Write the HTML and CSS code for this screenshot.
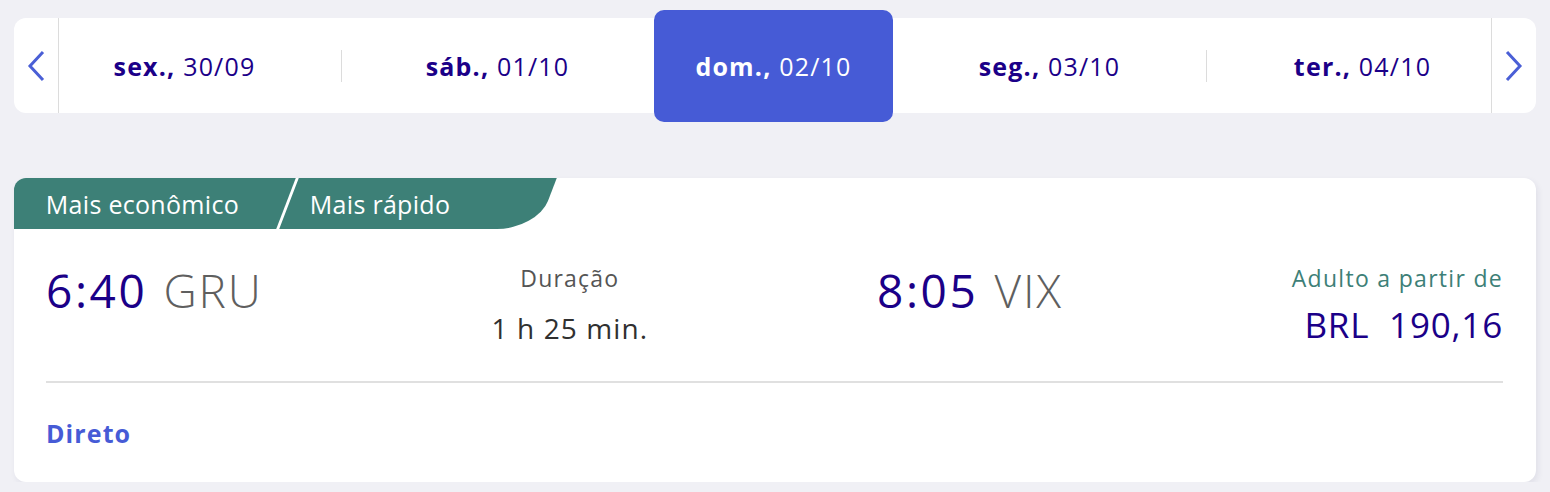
FILE: index.html
```html
<!DOCTYPE html>
<html lang="pt-BR">
<head>
    <meta charset="UTF-8">
    <meta name="viewport" content="width=device-width, initial-scale=1.0">
    <title>Voos GRU - VIX</title>
    <link rel="stylesheet" href="styles.css">
</head>
<body>
    <!-- Carrossel de datas -->
    <div class="date-bar">
        <button class="nav nav-prev" aria-label="Anterior">
            <svg width="18" height="32" viewBox="0 0 18 32"><path d="M16 2 L3 16 L16 30" fill="none" stroke="#4a5fd6" stroke-width="3"/></svg>
        </button>
        <div class="days">
            <div class="day"><b>sex.,</b> 30/09</div>
            <span class="sep"></span>
            <div class="day"><b>sáb.,</b> 01/10</div>
            <span class="sep sep-hidden"></span>
            <div class="day day-active"><b>dom.,</b> 02/10</div>
            <span class="sep sep-hidden"></span>
            <div class="day"><b>seg.,</b> 03/10</div>
            <span class="sep"></span>
            <div class="day"><b>ter.,</b> 04/10</div>
        </div>
        <button class="nav nav-next" aria-label="Próximo">
            <svg width="18" height="32" viewBox="0 0 18 32"><path d="M2 2 L15 16 L2 30" fill="none" stroke="#4a5fd6" stroke-width="3"/></svg>
        </button>
    </div>

    <!-- Card do voo -->
    <div class="flight-card">
        <div class="tags">
            <div class="tag tag-first"><span>Mais econômico</span></div>
            <div class="tag tag-last"><span>Mais rápido</span></div>
        </div>
        <div class="flight-row">
            <div class="stop">
                <span class="time">6:40</span>
                <span class="airport">GRU</span>
            </div>
            <div class="duration">
                <div class="duration-label">Duração</div>
                <div class="duration-value">1 h 25 min.</div>
            </div>
            <div class="stop">
                <span class="time">8:05</span>
                <span class="airport">VIX</span>
            </div>
            <div class="price">
                <div class="price-label">Adulto a partir de</div>
                <div class="price-value">BRL&nbsp; 190,16</div>
            </div>
        </div>
        <div class="flight-footer">
            <span class="direct">Direto</span>
        </div>
    </div>
</body>
</html>
```

FILE: styles.css
```css
body {
    margin: 0;
    background: #f0f0f5;
    font-family: "Open Sans", "Noto Sans", sans-serif;
    color: #1b0088;
}

/* Barra de datas */
.date-bar {
    display: flex;
    align-items: center;
    height: 95px;
    margin: 18px 14px 0;
    background: #fff;
    border-radius: 12px;
}
.nav {
    display: flex;
    align-items: center;
    justify-content: center;
    width: 45px;
    height: 100%;
    padding: 0;
    background: none;
    border: none;
    cursor: pointer;
}
.nav-prev {
    border-right: 1px solid #dcdcdc;
}
.nav-next {
    border-left: 1px solid #dcdcdc;
}
.days {
    flex: 1;
    display: flex;
    align-items: center;
    height: 100%;
    padding-left: 6px;
}
.day {
    width: 239px;
    text-align: center;
    font-size: 25px;
    letter-spacing: 1.2px;
    color: #1b0088;
    white-space: nowrap;
}
.day b {
    font-weight: 700;
}
.day-active {
    height: 112px;
    line-height: 112px;
    background: #465bd6;
    color: #fff;
    border-radius: 10px;
}
.sep {
    width: 1px;
    height: 32px;
    margin: 0 36.5px;
    background: #dcdcdc;
}
.sep-hidden {
    width: 0;
    margin: 0 18.5px;
    background: none;
}

/* Card */
.flight-card {
    margin: 65px 14px 0;
    background: #fff;
    border-radius: 12px;
    overflow: hidden;
    box-shadow: 2px 3px 6px rgba(40, 40, 90, 0.08);
}
.tags {
    display: flex;
    height: 51px;
    margin-left: -20px;
}
.tag {
    display: flex;
    align-items: center;
    background: #3d8077;
    color: #fff;
    font-size: 25px;
    letter-spacing: 0.3px;
    transform: skewX(-21deg);
}
.tag span {
    display: inline-block;
    transform: skewX(21deg);
}
.tag-first {
    width: 292px;
    padding-left: 52px;
    box-sizing: border-box;
}
.tag-last {
    width: 258px;
    margin-left: 3px;
    padding-left: 21px;
    box-sizing: border-box;
    border-bottom-right-radius: 40px 28px;
}

.flight-row {
    display: flex;
    justify-content: space-between;
    align-items: flex-start;
    margin: 0 33px 0 32px;
    padding: 33px 0 34px;
    border-bottom: 2px solid #e0e0e0;
}
.stop {
    line-height: 56px;
    white-space: nowrap;
}
.time {
    font-size: 46px;
    letter-spacing: 2.6px;
    color: #1b0088;
}
.airport {
    margin-left: 12px;
    font-size: 46px;
    letter-spacing: 1.8px;
    font-weight: 300;
    color: #5f5f5f;
}
.duration {
    text-align: center;
}
.duration-label {
    font-size: 23px;
    letter-spacing: 1.2px;
    line-height: 32px;
    color: #555;
}
.duration-value {
    margin-top: 16px;
    font-size: 28px;
    letter-spacing: 1.1px;
    line-height: 36px;
    color: #303030;
}
.price {
    text-align: right;
}
.price-label {
    font-size: 23px;
    letter-spacing: 1.3px;
    line-height: 32px;
    color: #3d8077;
}
.price-value {
    margin-top: 9px;
    font-size: 35px;
    letter-spacing: 0.8px;
    line-height: 44px;
    color: #1b0088;
}

.flight-footer {
    padding: 34px 32px 33px;
}
.direct {
    display: block;
    font-size: 25px;
    letter-spacing: 1.1px;
    line-height: 32px;
    font-weight: 700;
    color: #465bd6;
}
```
